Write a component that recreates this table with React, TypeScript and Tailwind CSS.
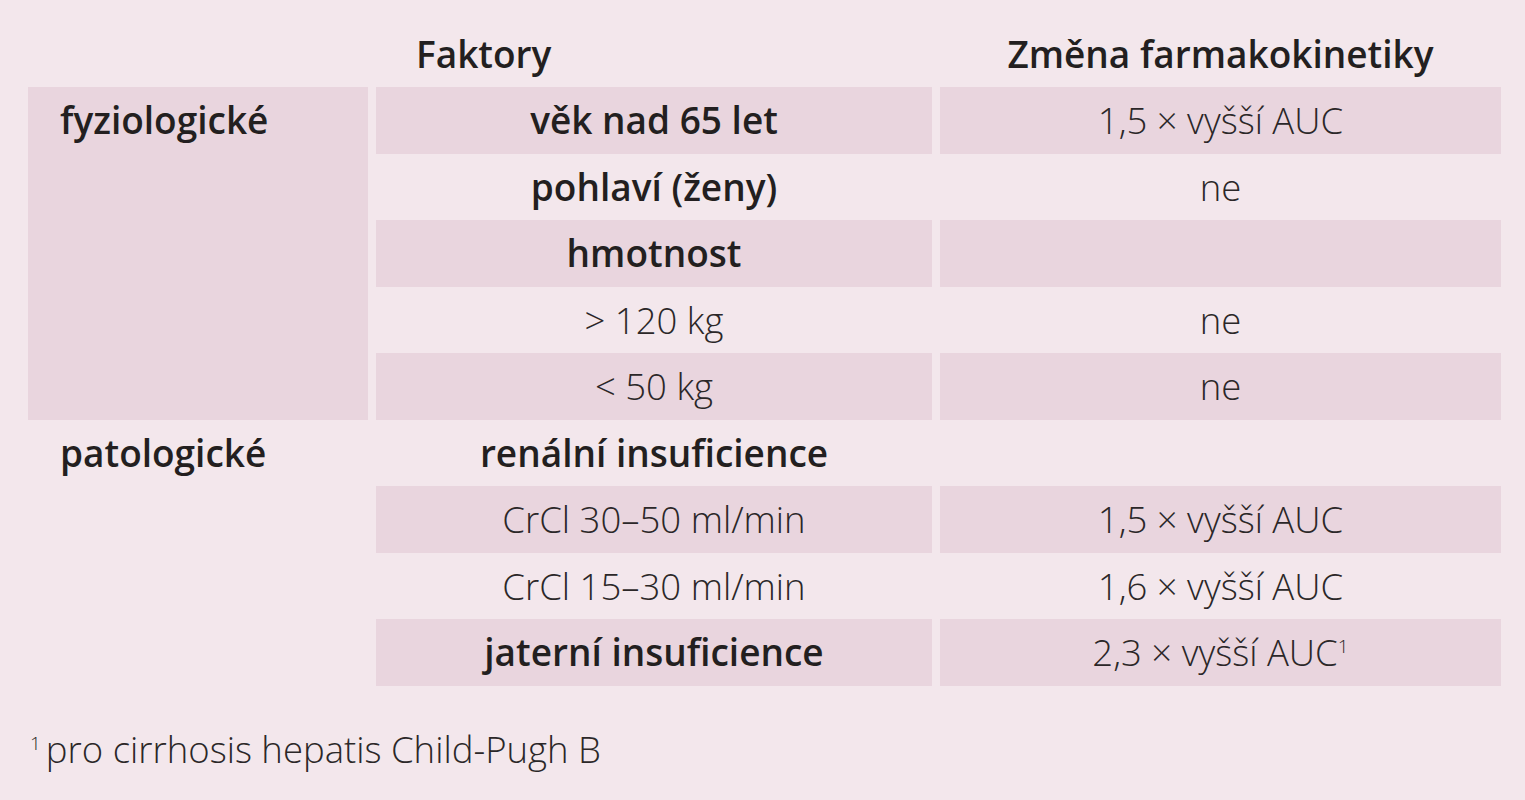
import React from "react";

type Row = {
  factor: string;
  bold?: boolean;
  value: React.ReactNode;
  shaded: boolean;
};

const Sup = ({ className = "" }: { className?: string }) => (
  <span className={`text-[19px] align-[13px] leading-none ${className}`}>1</span>
);

const physio: Row[] = [
  { factor: "věk nad 65 let", bold: true, value: "1,5 × vyšší AUC", shaded: true },
  { factor: "pohlaví (ženy)", bold: true, value: "ne", shaded: false },
  { factor: "hmotnost", bold: true, value: "", shaded: true },
  { factor: "> 120 kg", value: "ne", shaded: false },
  { factor: "< 50 kg", value: "ne", shaded: true },
];

const patho: Row[] = [
  { factor: "renální insuficience", bold: true, value: "", shaded: false },
  { factor: "CrCl 30–50 ml/min", value: "1,5 × vyšší AUC", shaded: true },
  { factor: "CrCl 15–30 ml/min", value: "1,6 × vyšší AUC", shaded: false },
  {
    factor: "jaterní insuficience",
    bold: true,
    value: (
      <>
        2,3 × vyšší AUC
        <Sup />
      </>
    ),
    shaded: true,
  },
];

const Cells = ({ row }: { row: Row }) => (
  <>
    <div
      className={`h-[66.5px] leading-[66.5px] text-center ${
        row.shaded ? "bg-[#e9d5de]" : ""
      } ${
        row.bold
          ? "font-semibold text-[37px] text-[#231f20]"
          : "font-light text-[36.5px] text-[#2b2728]"
      }`}
    >
      {row.factor}
    </div>
    <div
      className={`h-[66.5px] leading-[66.5px] text-center font-light text-[36.5px] text-[#2b2728] ${
        row.shaded ? "bg-[#e9d5de]" : ""
      }`}
    >
      {row.value}
    </div>
  </>
);

const App = () => {
  return (
    <div
      className="w-[1525px] h-[800px] bg-[#f3e7ec] text-[37px] pl-[28px] pt-[21px]"
      style={{ fontFamily: '"Open Sans", "Liberation Sans", sans-serif' }}
    >
      <div className="grid grid-cols-[340px_556px_561px] gap-x-[8px]">
        {/* Header */}
        <div className="h-[66px]" />
        <div className="h-[66px] leading-[66px] pl-[40px] font-semibold text-[#231f20]">
          Faktory
        </div>
        <div className="h-[66px] leading-[66px] text-center font-semibold text-[#231f20]">
          Změna farmakokinetiky
        </div>

        {/* fyziologické */}
        <div className="row-span-5 bg-[#e9d5de] pl-[32px] leading-[66.5px] font-semibold text-[#231f20]">
          fyziologické
        </div>
        {physio.map((r, i) => (
          <Cells key={i} row={r} />
        ))}

        {/* patologické */}
        <div className="row-span-4 pl-[32px] leading-[66.5px] font-semibold text-[#231f20]">
          patologické
        </div>
        {patho.map((r, i) => (
          <Cells key={i} row={r} />
        ))}
      </div>

      {/* Footnote */}
      <p className="mt-[31px] pl-[2px] font-light text-[36.5px] text-[#2b2728] leading-[64px]">
        <Sup className="mr-[5px]" />
        pro cirrhosis hepatis Child-Pugh B
      </p>
    </div>
  );
};

export default App;
